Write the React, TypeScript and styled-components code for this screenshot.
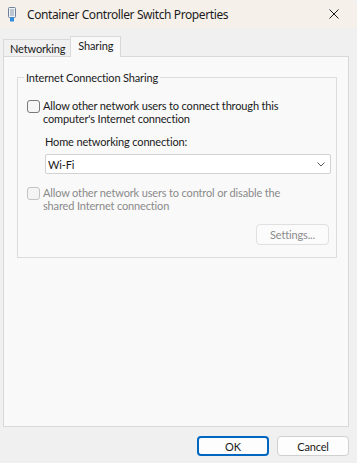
import React from "react";
import styled, { createGlobalStyle } from "styled-components";

const GlobalStyle = createGlobalStyle`
  body {
    margin: 0;
    background: #f0f0f0;
    font-family: "Segoe UI", Lato, "Noto Sans", sans-serif;
    font-size: 11px;
    letter-spacing: -0.15px;
    color: #1a1a1a;
  }
`;

const Window = styled.div`
  width: 357px;
  height: 463px;
  display: flex;
  flex-direction: column;
  background: #f0f0f0;
  overflow: hidden;
`;

const TitleBar = styled.div`
  height: 28px;
  flex: none;
  display: flex;
  align-items: center;
  padding-left: 8px;
  background: #f6f0eb;
  border-top-right-radius: 7px;
`;

const TitleText = styled.span`
  margin-left: 11px;
  font-family: "Noto Sans", sans-serif;
  font-size: 12px;
  letter-spacing: -0.4px;
  color: #1c1c1c;
  flex: 1;
`;

const CloseButton = styled.div`
  width: 46px;
  height: 28px;
  display: flex;
  align-items: center;
  justify-content: center;
`;

const Body = styled.div`
  flex: 1;
  display: flex;
  flex-direction: column;
  padding: 8px 8px 7px 3px;
`;

const TabStrip = styled.div`
  display: flex;
  align-items: flex-end;
  height: 21px;
  position: relative;
  z-index: 1;
  margin-bottom: -1px;
`;

const Tab = styled.div<{ $active?: boolean }>`
  height: ${(p) => (p.$active ? "21px" : "18px")};
  padding: ${(p) => (p.$active ? "0 7px 3px 7px" : "0 5px 0 6px")};
  box-sizing: border-box;
  display: flex;
  align-items: center;
  font-size: 11px;
  border: 1px solid #d9d9d9;
  border-bottom: ${(p) => (p.$active ? "none" : "1px solid #d9d9d9")};
  background: ${(p) => (p.$active ? "#f9f9f9" : "#f0f0f0")};
  margin-left: ${(p) => (p.$active ? "-1px" : "0")};
`;

const Panel = styled.div`
  flex: 1;
  border: 1px solid #d9d9d9;
  background: #f9f9f9;
  display: flex;
  flex-direction: column;
`;

const Group = styled.fieldset`
  margin: 13px 11px 0 13px;
  padding: 0 7px 12px 9px;
  border: 1px solid #dcdcdc;
  display: flex;
  flex-direction: column;
  min-width: 0;
`;

const Legend = styled.legend`
  margin-left: -3px;
  padding: 0 2px;
  line-height: 15px;
`;

const CheckRow = styled.div<{ $disabled?: boolean; $gap: number }>`
  display: flex;
  gap: 3px;
  margin-top: ${(p) => p.$gap}px;
  color: ${(p) => (p.$disabled ? "#8a8a8a" : "#1a1a1a")};
`;

const Box = styled.div<{ $disabled?: boolean }>`
  width: 13px;
  height: 13px;
  box-sizing: border-box;
  flex: none;
  margin-top: 1px;
  border: 1px solid ${(p) => (p.$disabled ? "#c4c4c4" : "#7a7a7a")};
  border-radius: 3px;
  background: ${(p) => (p.$disabled ? "#f4f4f4" : "#f6f6f6")};
`;

const CheckText = styled.span`
  line-height: 13px;
`;

const FieldLabel = styled.div`
  margin: 10px 0 0 18px;
  line-height: 13px;
`;

const Select = styled.div`
  margin: 6px -2px 0 18px;
  height: 20px;
  box-sizing: border-box;
  border: 1px solid #d2d2d2;
  border-radius: 2px;
  background: #ffffff;
  display: flex;
  align-items: center;
  justify-content: space-between;
  padding: 0 5px 0 2px;
`;

const ButtonRow = styled.div`
  display: flex;
  justify-content: flex-end;
  gap: 8px;
  margin-top: 9px;
`;

const PushButton = styled.div<{ $primary?: boolean; $disabled?: boolean; $w?: number }>`
  width: ${(p) => p.$w ?? 72}px;
  height: ${(p) => (p.$disabled ? 21 : 20)}px;
  box-sizing: border-box;
  display: flex;
  align-items: center;
  justify-content: center;
  border-radius: 4px;
  border: ${(p) =>
    p.$primary ? "2px solid #0067c0" : p.$disabled ? "1px solid #e0e0e0" : "1px solid #d0d0d0"};
  background: ${(p) => (p.$disabled ? "#fbfbfb" : "#fdfdfd")};
  color: ${(p) => (p.$disabled ? "#8b8b8b" : "#1a1a1a")};
`;

const SettingsWrap = styled.div`
  display: flex;
  justify-content: flex-end;
  margin-top: 12px;
`;

const AdapterIcon = () => (
  <svg width="8" height="15" viewBox="0 0 8 15">
    <rect x="0.5" y="0.5" width="7" height="10" rx="1" fill="#eef2f6" stroke="#6f8096" />
    <line x1="3" y1="2" x2="3" y2="9" stroke="#8b99ab" />
    <line x1="5" y1="2" x2="5" y2="9" stroke="#8b99ab" />
    <rect x="2" y="10.5" width="4" height="4" fill="#2f8ee0" />
  </svg>
);

const CloseIcon = () => (
  <svg width="10" height="10" viewBox="0 0 10 10">
    <path d="M0.5 0.5 L9.5 9.5 M9.5 0.5 L0.5 9.5" stroke="#1a1a1a" strokeWidth="1" />
  </svg>
);

const Chevron = () => (
  <svg width="8" height="5" viewBox="0 0 8 5">
    <path d="M0.5 0.5 L4 4 L7.5 0.5" stroke="#5a5a5a" fill="none" strokeWidth="1" />
  </svg>
);

const App: React.FC = () => {
  return (
    <>
      <GlobalStyle />
      <Window>
        <TitleBar>
          <AdapterIcon />
          <TitleText>Container Controller Switch Properties</TitleText>
          <CloseButton>
            <CloseIcon />
          </CloseButton>
        </TitleBar>
        <Body>
          <TabStrip>
            <Tab>Networking</Tab>
            <Tab $active>Sharing</Tab>
          </TabStrip>
          <Panel>
            <Group>
              <Legend>Internet Connection Sharing</Legend>
              <CheckRow $gap={14}>
                <Box />
                <CheckText>
                  Allow other network users to connect through this
                  <br />
                  computer's Internet connection
                </CheckText>
              </CheckRow>
              <FieldLabel>Home networking connection:</FieldLabel>
              <Select>
                <span>Wi-Fi</span>
                <Chevron />
              </Select>
              <CheckRow $disabled $gap={12}>
                <Box $disabled />
                <CheckText>
                  Allow other network users to control or disable the
                  <br />
                  shared Internet connection
                </CheckText>
              </CheckRow>
              <SettingsWrap>
                <PushButton $disabled $w={73}>
                  Settings...
                </PushButton>
              </SettingsWrap>
            </Group>
          </Panel>
          <ButtonRow>
            <PushButton $primary>OK</PushButton>
            <PushButton>Cancel</PushButton>
          </ButtonRow>
        </Body>
      </Window>
    </>
  );
};

export default App;
